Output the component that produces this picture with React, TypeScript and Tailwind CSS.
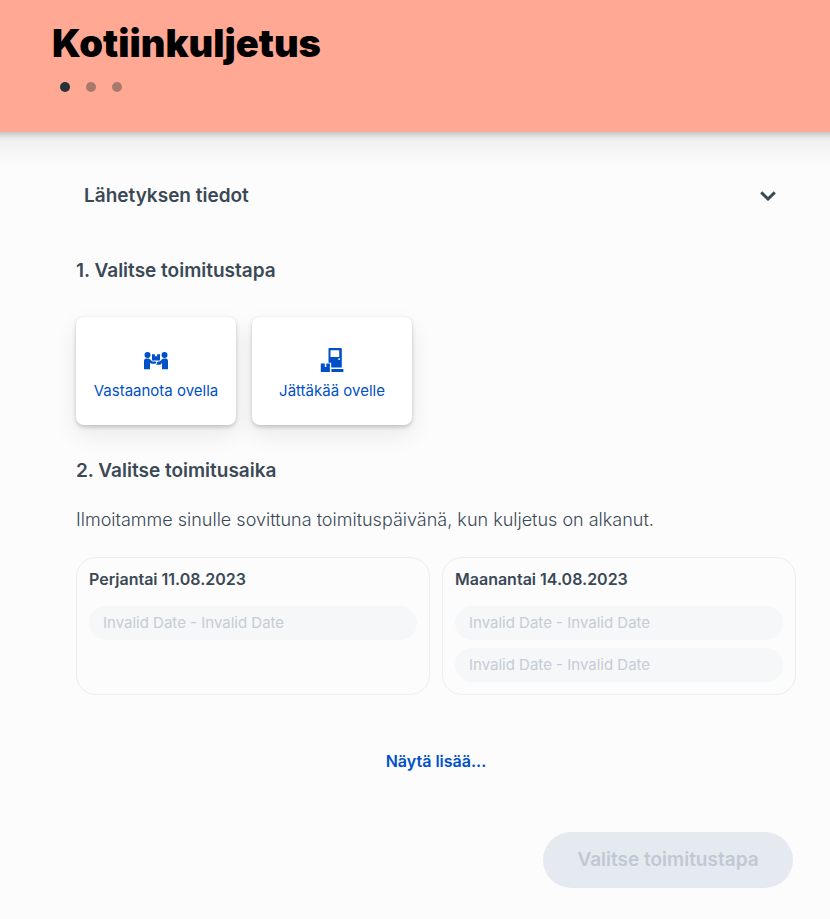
import { useState } from "react";

const days = [
    { id: 1, title: "Perjantai 11.08.2023", slots: ["Invalid Date - Invalid Date"] },
    {
        id: 2,
        title: "Maanantai 14.08.2023",
        slots: ["Invalid Date - Invalid Date", "Invalid Date - Invalid Date"],
    },
];

function HandoverIcon() {
    return (
        <svg viewBox="0 0 24 24" className="size-6" fill="currentColor" aria-hidden="true">
            <circle cx="3.5" cy="6.9" r="3" />
            <circle cx="20.5" cy="6.9" r="3" />
            <path d="M8 6.2h2.9v2.4l1.1-.7 1.1.7V6.2H16v6.3H8z" />
            <path d="M0 13c0-1.5.9-2.5 2.2-2.5h1.800c.8 0 1.400.3 1.900.8l2.300 2.300h2.800c.7 0 1.200.4 1.200 1s-.5 1.200-1.200 1.200H7.600L6 14.800v6.500H0z" />
            <path d="M24 13c0-1.500-.9-2.500-2.200-2.500H20c-.8 0-1.400.3-1.900.8l-2.300 2.300h-1.200c-.9 0-1.500.5-1.500 1.100 0 .8-.5 1.500-1.100 1.700.2.200.4.300.7.300h3.700l1.600-1.700v6.300h6z" />
        </svg>
    );
}

function DoorIcon() {
    return (
        <svg viewBox="0 0 24 24" className="size-6" fill="currentColor" aria-hidden="true">
            <path
                fillRule="evenodd"
                d="M9.2 0h11.3c.8 0 1.3.5 1.3 1.2v18.3H11.2v-4.7H8.5V1.2C8.5.5 8.8 0 9.2 0zM10.5 2.3v6.6h8.7V2.3zM18.4 10.2v1.9h1.5v-1.9z"
            />
            <path d="M.8 15.600h4v3.300h1.500v-3.300h3.600v8.400H.8z" />
            <path d="M11.400 21h12v3h-12z" />
        </svg>
    );
}

const methods = [
    { id: "receive", label: "Vastaanota ovella", Icon: HandoverIcon },
    { id: "leave", label: "Jättäkää ovelle", Icon: DoorIcon },
];

export default function App() {
    const [open, setOpen] = useState(false);

    return (
        <div className="min-h-screen overflow-x-hidden bg-[#fcfcfc] font-['Inter',sans-serif] text-[#3b4957]">
            <header className="bg-[#ffa894] px-[52px] pt-5 pb-10 shadow-[0_-8px_6px_10px_rgba(0,0,0,0.22),0_-20px_30px_30px_rgba(0,0,0,0.09)]">
                <h1 className="text-[38px] leading-[46px] font-black text-black">Kotiinkuljetus</h1>
                <div className="mt-4 flex gap-4 px-2">
                    <span className="size-[10px] rounded-full bg-[#263238]" />
                    <span className="size-[10px] rounded-full bg-[#a9796e]" />
                    <span className="size-[10px] rounded-full bg-[#a9796e]" />
                </div>
            </header>

            <main className="pt-10 pr-[34px] pb-[31px] pl-[76px]">
                <button
                    type="button"
                    aria-expanded={open}
                    onClick={() => setOpen(!open)}
                    className="flex h-12 w-full items-center justify-between pr-5 pl-2 text-[19px] leading-7 font-semibold"
                >
                    Lähetyksen tiedot
                    <svg viewBox="0 0 16 10" className="h-[10px] w-4" fill="none" stroke="currentColor" strokeWidth="3" aria-hidden="true">
                        <path d="M1.2 1.4 8 8l6.8-6.6" />
                    </svg>
                </button>

                <h2 className="mt-[37px] text-[19px] leading-7 font-semibold">1. Valitse toimitustapa</h2>
                <div className="mt-8 flex gap-4">
                    {methods.map(({ id, label, Icon }) => (
                        <button
                            key={id}
                            type="button"
                            className="flex w-40 flex-col items-center gap-[9px] rounded-lg bg-white pt-[31px] pb-6 text-[15px] leading-5 text-[#0050c8] shadow-[0_2px_4px_rgba(0,0,0,0.2),0_10px_24px_rgba(0,0,0,0.08)]"
                        >
                            <Icon />
                            {label}
                        </button>
                    ))}
                </div>

                <h2 className="mt-8 text-[19px] leading-7 font-semibold">2. Valitse toimitusaika</h2>
                <p className="mt-[23px] text-lg leading-6 font-light">
                    Ilmoitamme sinulle sovittuna toimituspäivänä, kun kuljetus on alkanut.
                </p>

                <div className="mt-[25px] grid grid-cols-2 gap-3">
                    {days.map((day) => (
                        <section key={day.id} className="rounded-[20px] border border-[#ebedf2] px-3 pt-[9px] pb-3">
                            <h3 className="text-base font-semibold">{day.title}</h3>
                            <div className="mt-[15px] flex flex-col gap-2">
                                {day.slots.map((slot, i) => (
                                    <button
                                        key={i}
                                        type="button"
                                        disabled
                                        className="h-[34px] rounded-full bg-[#f5f7f9] px-[14px] text-left text-[15px] leading-5 text-[#c5ccd5]"
                                    >
                                        {slot}
                                    </button>
                                ))}
                            </div>
                        </section>
                    ))}
                </div>

                <div className="mt-[54px] flex justify-center">
                    <button type="button" className="text-base font-semibold text-[#0050c8]">
                        Näytä lisää...
                    </button>
                </div>

                <div className="mt-[59px] flex justify-end pr-[3px]">
                    <button
                        type="button"
                        disabled
                        className="h-14 min-w-[250px] rounded-full bg-[#e5eaf1] px-8 text-[19px] leading-7 font-semibold text-[#c2c8d1]"
                    >
                        Valitse toimitustapa
                    </button>
                </div>
            </main>
        </div>
    );
}
